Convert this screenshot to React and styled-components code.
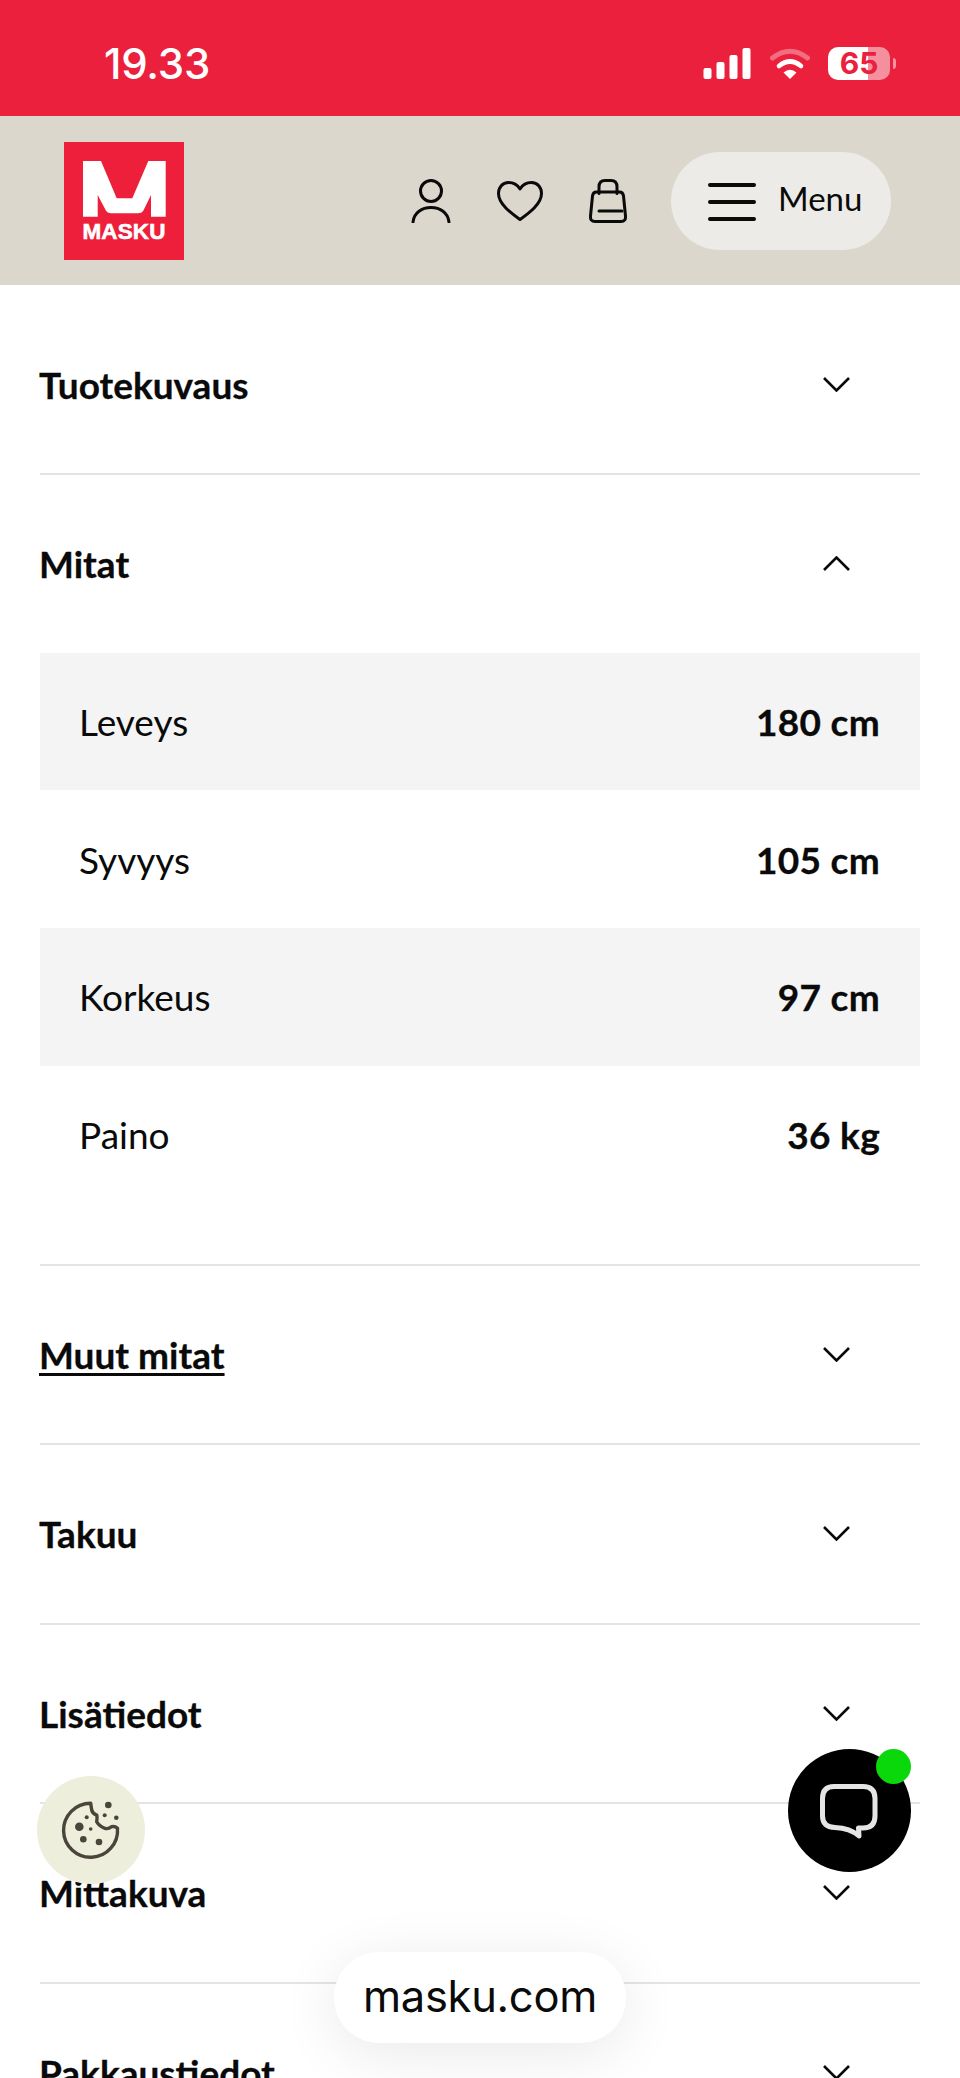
import React from "react";
import styled, { createGlobalStyle } from "styled-components";

const Global = createGlobalStyle`
  html, body { margin: 0; padding: 0; background: #fff; }
  body { font-family: "Lato", "Noto Sans", sans-serif; color: #0a0a0a; }
`;

const Page = styled.div`
  position: relative;
  width: 960px;
  height: 2078px;
  overflow: hidden;
  background: #fff;
`;

const StatusBar = styled.div`
  height: 116px;
  background: #ea203c;
  display: flex;
  align-items: center;
  justify-content: space-between;
  padding: 10px 70px 0 104px;
  box-sizing: border-box;
  color: #fff;
`;

const Time = styled.span`
  font-family: "Inter", sans-serif;
  font-weight: 500;
  font-size: 42px;
  letter-spacing: -0.2px;
`;

const StatusIcons = styled.div`
  display: flex;
  align-items: center;
`;

const SignalIcon = styled.svg`
  display: block;
  fill: #fff;
`;

const WifiIcon = styled.svg`
  display: block;
  fill: none;
  margin-left: 19px;
`;

const Battery = styled.div`
  width: 62px;
  height: 33px;
  margin-left: 18px;
  border-radius: 10px;
  background: linear-gradient(to right, #fff 0, #fff 40px, rgba(255, 255, 255, 0.5) 40px);
  color: #ea203c;
  font-family: "Inter", sans-serif;
  font-weight: 700;
  font-size: 30px;
  line-height: 33px;
  text-align: center;
  position: relative;
  &::after {
    content: "";
    position: absolute;
    right: -6px;
    top: 11px;
    width: 3px;
    height: 11px;
    border-radius: 0 4px 4px 0;
    background: rgba(255, 255, 255, 0.5);
  }
`;

const Header = styled.header`
  height: 169px;
  background: #dbd7cc;
  display: flex;
  align-items: center;
  padding: 0 69px 0 64px;
  box-sizing: border-box;
`;

const Logo = styled.div`
  width: 120px;
  height: 118px;
  background: #ee1f3a;
  display: flex;
  flex-direction: column;
  align-items: center;
  padding-top: 19px;
  box-sizing: border-box;
  color: #fff;
`;

const LogoWord = styled.span`
  font-family: "Liberation Sans", sans-serif;
  font-weight: 700;
  font-size: 22.5px;
  line-height: 20px;
  margin-top: 5px;
  -webkit-text-stroke: 0.6px #fff;
  letter-spacing: 0.1px;
`;

const Actions = styled.div`
  margin-left: auto;
  display: flex;
  align-items: center;
`;

const ActionIcon = styled.svg`
  display: block;
  fill: none;
  stroke: #0a0a0a;
  stroke-width: 3;
  stroke-linecap: round;
  stroke-linejoin: round;
  margin-right: ${(p) => p.$gap}px;
`;

const MenuPill = styled.div`
  width: 220px;
  height: 98px;
  border-radius: 49px;
  background: #ecebe8;
  display: flex;
  align-items: center;
  padding-left: 37px;
  box-sizing: border-box;
  gap: 22px;
`;

const Burger = styled.div`
  width: 48px;
  display: flex;
  flex-direction: column;
  gap: 13.3px;
  margin-top: 3px;
`;

const BurgerLine = styled.span`
  height: 4px;
  border-radius: 2px;
  background: #0a0a0a;
`;

const MenuLabel = styled.span`
  font-size: 33px;
  margin-top: -6px;
`;

const List = styled.div`
  padding: 10.5px 40px 0;
`;

const Section = styled.section`
  border-bottom: 2px solid #e4e4e4;
  &:last-child { border-bottom: 0; }
`;

const SectionHead = styled.div`
  height: 177.5px;
  display: flex;
  align-items: center;
  justify-content: space-between;
  padding-right: 70px;
`;

const SectionTitle = styled.span`
  font-size: 37px;
  font-weight: 700;
  margin-left: -1px;
  -webkit-text-stroke: 0.3px #0a0a0a;
  text-decoration: ${(p) => (p.$link ? "underline" : "none")};
  text-underline-offset: 4px;
`;

const Chevron = styled.svg`
  display: block;
  fill: none;
  stroke: #0a0a0a;
  stroke-width: 2.6;
  transform: ${(p) => (p.$up ? "scaleY(-1)" : "none")};
`;

const Spec = styled.div`
  padding-bottom: 60.3px;
`;

const SpecRow = styled.div`
  height: 137.7px;
  display: flex;
  align-items: center;
  justify-content: space-between;
  padding: 0 40px;
  font-size: 37px;
  background: ${(p) => (p.$shade ? "#f4f4f4" : "#fff")};
`;

const SpecLabel = styled.span`
  margin-left: -1px;
`;

const SpecValue = styled.span`
  font-weight: 700;
  letter-spacing: 0.3px;
  -webkit-text-stroke: 0.3px #0a0a0a;
`;

const CookieButton = styled.div`
  position: absolute;
  left: 37px;
  top: 1776px;
  width: 108px;
  height: 108px;
  border-radius: 50%;
  background: #eeeedd;
`;

const ChatButton = styled.div`
  position: absolute;
  left: 788px;
  top: 1749px;
  width: 123px;
  height: 123px;
  border-radius: 50%;
  background: #000;
`;

const OnlineDot = styled.span`
  position: absolute;
  right: 0;
  top: 0;
  width: 35px;
  height: 35px;
  border-radius: 50%;
  background: #0bd80b;
`;

const UrlPill = styled.div`
  position: absolute;
  left: 334px;
  top: 1952px;
  width: 292px;
  height: 91px;
  padding-bottom: 4px;
  box-sizing: border-box;
  border-radius: 45px;
  background: #fff;
  box-shadow: 0 10px 60px rgba(0, 0, 0, 0.09);
  display: flex;
  align-items: center;
  justify-content: center;
  font-family: "Inter", sans-serif;
  font-size: 43.5px;
  letter-spacing: -0.3px;
`;

const Down = ({ up }) => (
  <Chevron $up={up} width="27" height="15" viewBox="0 0 27 15">
    <polyline points="1,1 13.5,13.5 26,1" />
  </Chevron>
);

const Row = ({ title, link }) => (
  <Section>
    <SectionHead>
      <SectionTitle $link={link}>{title}</SectionTitle>
      <Down />
    </SectionHead>
  </Section>
);

const specs = [
  ["Leveys", "180 cm"],
  ["Syvyys", "105 cm"],
  ["Korkeus", "97 cm"],
  ["Paino", "36 kg"],
];

export default function App() {
  return (
    <Page>
      <Global />
      <StatusBar>
        <Time>19.33</Time>
        <StatusIcons>
          <SignalIcon width="48" height="31" viewBox="0 0 48 31">
            <rect x="0.5" y="20" width="8" height="11" rx="2" />
            <rect x="13.5" y="14" width="8" height="17" rx="2" />
            <rect x="26.5" y="7" width="8" height="24" rx="2" />
            <rect x="39.5" y="0" width="8" height="31" rx="2" />
          </SignalIcon>
          <WifiIcon width="40" height="31" viewBox="0 0 40 31">
            <path d="M2.5 10 Q20 -3.5 37.5 10" stroke="#fff" strokeOpacity="0.35" strokeWidth="5" strokeLinecap="round" />
            <path d="M9 18 Q20 9 31 18" stroke="#fff" strokeWidth="4.6" strokeLinecap="round" />
            <path d="M13.5 24.5 Q20 19 26.5 24.5 L20 31 Z" fill="#fff" />
          </WifiIcon>
          <Battery>65</Battery>
        </StatusIcons>
      </StatusBar>

      <Header>
        <Logo>
          <svg width="83" height="56" viewBox="0 0 83 56" fill="#fff">
            <path d="M0 0 H18 L33.7 37.3 H49.3 L65.3 0 H82.7 V55.7 H68 V34 L60.3 49.7 Q58.5 52.3 55.3 52.3 H28 Q24.8 52.3 23 49.7 L14.7 34 V55.7 H0 Z" />
          </svg>
          <LogoWord>MASKU</LogoWord>
        </Logo>
        <Actions>
          <ActionIcon $gap={46} width="40" height="44" viewBox="0 0 40 44">
            <circle cx="20" cy="12" r="10.5" />
            <path d="M2 43 C3 33.5 11 28.5 20 28.5 S37 33.5 38 43" />
          </ActionIcon>
          <ActionIcon $gap={46} width="46" height="40" viewBox="0 0 46 40">
            <path d="M23 8 C20 3 15.5 1.5 11.5 1.5 C5.5 1.5 1.5 6.5 1.5 12.5 C1.5 23 14 32 23 38.5 C32 32 44.5 23 44.5 12.5 C44.5 6.5 40.5 1.5 34.5 1.5 C30.5 1.5 26 3 23 8 Z" />
          </ActionIcon>
          <ActionIcon $gap={44} width="38" height="44" viewBox="0 0 38 44">
            <path d="M7.5 13 H30.5 Q34 13 34.5 17 L36.5 37 Q37 42.5 32 42.5 H6 Q1 42.5 1.5 37 L3.5 17 Q4 13 7.5 13 Z" />
            <path d="M10 14.5 V8 Q10 1.5 16 1.5 H22 Q28 1.5 28 8 V14.5" />
            <path d="M10 32 H33" />
          </ActionIcon>
          <MenuPill>
            <Burger>
              <BurgerLine />
              <BurgerLine />
              <BurgerLine />
            </Burger>
            <MenuLabel>Menu</MenuLabel>
          </MenuPill>
        </Actions>
      </Header>

      <List>
        <Row title="Tuotekuvaus" />
        <Section>
          <SectionHead>
            <SectionTitle>Mitat</SectionTitle>
            <Down up />
          </SectionHead>
          <Spec>
            {specs.map(([label, value], i) => (
              <SpecRow key={label} $shade={i % 2 === 0}>
                <SpecLabel>{label}</SpecLabel>
                <SpecValue>{value}</SpecValue>
              </SpecRow>
            ))}
          </Spec>
        </Section>
        <Row title="Muut mitat" link />
        <Row title="Takuu" />
        <Row title="Lisätiedot" />
        <Row title="Mittakuva" />
        <Row title="Pakkaustiedot" />
      </List>

      <CookieButton>
        <svg width="108" height="108" viewBox="0 0 108 108" fill="#4a453a">
          <path d="M53.7 27.3 A27 27 0 1 0 80.5 52.3 Q78 50 74.7 50.7 Q71 53.5 68 52.3 Q62 50 59.7 45.7 Q60.5 41 59.7 39 Q55.5 37.5 54.7 34 Q54 30 53.7 27.3 Z" fill="none" stroke="#4a453a" strokeWidth="3.4" strokeLinejoin="round" />
          <circle cx="42.3" cy="50.7" r="4.3" />
          <circle cx="46.3" cy="63.3" r="3.3" />
          <circle cx="62" cy="66" r="3.3" />
          <circle cx="53.7" cy="53" r="1.8" />
          <circle cx="49.7" cy="41.3" r="2" />
          <circle cx="71.3" cy="29" r="3.3" />
          <circle cx="67.7" cy="39.3" r="2" />
          <circle cx="79.3" cy="41.7" r="2.3" />
        </svg>
      </CookieButton>

      <ChatButton>
        <svg width="123" height="123" viewBox="0 0 123 123" fill="none">
          <path d="M46 37.5 H75 Q87 37.5 87 49.5 V67 Q87 79 75 79 L70.5 79 L71 87 Q62 79 47 78.5 Q34.5 78 34.5 67 V49.5 Q34.5 37.5 46 37.5 Z" stroke="#e5e5e5" strokeWidth="5" strokeLinejoin="round" />
        </svg>
        <OnlineDot />
      </ChatButton>

      <UrlPill>masku.com</UrlPill>
    </Page>
  );
}
